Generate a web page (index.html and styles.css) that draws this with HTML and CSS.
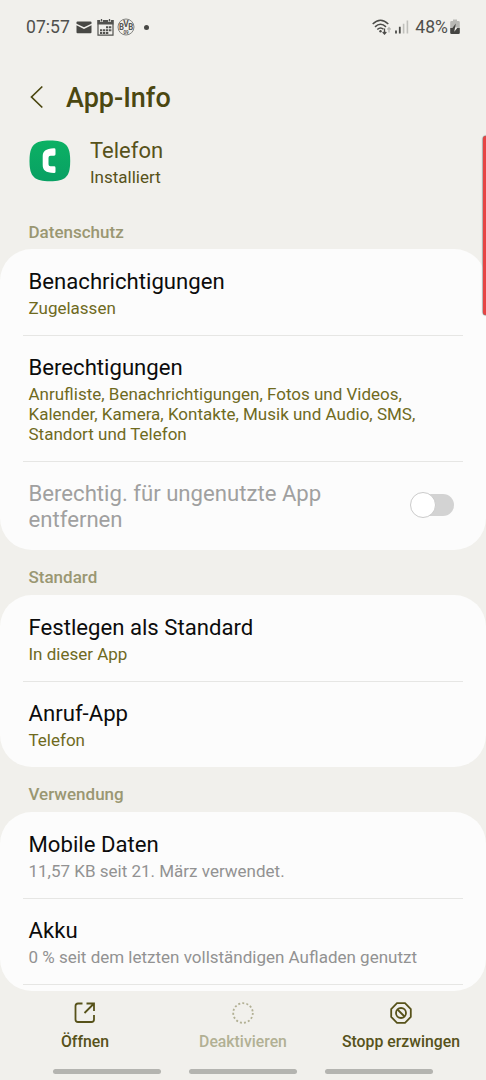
FILE: index.html
```html
<!DOCTYPE html>
<html lang="de">
<head>
    <meta charset="UTF-8">
    <meta name="viewport" content="width=device-width, initial-scale=1.0">
    <title>App-Info</title>
    <link rel="stylesheet" href="styles.css">
</head>
<body>
    <div class="statusbar">
        <div class="status-left">
            <span class="clock">07:57</span>
            <svg class="mail" width="16" height="13" viewBox="0 0 16 13">
                <path d="M1.5 0.5h13q1 0 1 1v1.2L8 6.3 0.5 2.7V1.5q0-1 1-1z" fill="#484845"/>
                <path d="M0.5 4.3L8 7.9l7.5-3.6v7q0 1-1 1h-13q-1 0-1-1z" fill="#484845"/>
            </svg>
            <svg class="calendar" width="17" height="17" viewBox="0 0 17 17">
                <path d="M1 1.5h15v14.7h-15z" fill="none" stroke="#52524f" stroke-width="1.2"/>
                <path d="M0.5 1h16v4.5h-16z" fill="#52524f"/>
                <path d="M4.5 0v3M12.5 0v3" stroke="#f1f0ec" stroke-width="2.6"/>
                <path d="M4.5 0v2.6M12.5 0v2.6" stroke="#52524f" stroke-width="1.3"/>
                <path d="M9 8.3h6M3 11.2h12M3 14h9" stroke="#52524f" stroke-width="2" stroke-dasharray="2.200 0.700"/>
            </svg>
            <svg class="club" width="18" height="18" viewBox="0 0 18 18">
                <circle cx="9" cy="9" r="8" fill="none" stroke="#777774" stroke-width="0.9"/>
                <text x="1.900" y="12.300" font-size="9" textLength="5" lengthAdjust="spacingAndGlyphs">B</text>
                <text x="6.300" y="9" font-size="9.500" textLength="5.400" lengthAdjust="spacingAndGlyphs">V</text>
                <text x="11.200" y="12.300" font-size="9" textLength="5" lengthAdjust="spacingAndGlyphs">B</text>
                <text x="6.400" y="16.200" font-size="4.500">09</text>
            </svg>
            <span class="dot"></span>
        </div>
        <div class="status-right">
            <svg class="wifi" width="20" height="18" viewBox="0 0 20 18">
                <g fill="none" stroke="#4b4b48" stroke-width="1.5">
                    <path d="M0.7 6Q8.5 -1.5 16.3 6"/>
                    <path d="M3 8.9Q8.5 3.6 14 8.9"/>
                    <path d="M5.3 11.5Q8.5 8.5 11.5 11.2"/>
                </g>
                <circle cx="8.5" cy="13.3" r="1.2" fill="#4b4b48"/>
                <path d="M12.5 10.5v5M10.7 14l1.8 2 1.8-2" fill="none" stroke="#4b4b48" stroke-width="1.3"/>
                <path d="M17 14.5V10M15.4 11.5l1.6-1.8 1.6 1.8" fill="none" stroke="#b5b5b1" stroke-width="1.2"/>
            </svg>
            <svg class="signal" width="14" height="14" viewBox="0 0 14 14">
                <path d="M1 13.5v-3M4.8 13.5V6.8" stroke="#4b4b48" stroke-width="1.8"/>
                <path d="M8.6 13.5V3.8M12.4 13.5V0.5" stroke="#c0c0bc" stroke-width="1.6"/>
            </svg>
            <span class="percent">48%</span>
            <svg class="battery" width="10" height="16" viewBox="0 0 10 16">
                <path d="M3 0.5h4v1.5h1.5q1.3 0 1.3 1.3V9H0.2V3.3Q0.2 2 1.5 2H3z" fill="#b9b9b5"/>
                <path d="M0.2 9h9.6v4.7q0 1.300-1.300 1.300h-7q-1.300 0-1.300-1.300z" fill="#454542"/>
                <path d="M5.800 4.500L2.300 9.200H5z" fill="#454542"/>
                <path d="M4.300 12.700L7.600 8.500H5z" fill="#f1f0ec"/>
            </svg>
        </div>
    </div>

    <div class="header">
        <svg class="back" width="14" height="24" viewBox="0 0 14 24">
            <path d="M12.3 1.5L1.5 12l10.8 10.500" fill="none" stroke="#4b4710" stroke-width="1.7"/>
        </svg>
        <h1>App-Info</h1>
    </div>

    <div class="app">
        <svg width="42" height="42" viewBox="0 0 42 42">
            <defs>
                <linearGradient id="green" x1="0" y1="0" x2="0" y2="1">
                    <stop offset="0" stop-color="#0cb164"/>
                    <stop offset="1" stop-color="#08a063"/>
                </linearGradient>
            </defs>
            <path d="M21 0.5C36.5 0.5 41.2 5 41.2 21S36.500 41.200 21 41.200 0.500 37 0.500 21 5.500 0.500 21 0.500z" fill="url(#green)"/>
            <path d="M25 8.300q1.500-0.100 1.500 1.400v4.600q0 1.400-1.400 1.400h-3.600q-2 0-2 2v6.600q0 2 2 2h3.600q1.400 0 1.400 1.400v4q0 1.500-1.500 1.400C16.500 32.700 13.700 30 13.700 25v-8.500C13.700 11.500 16.500 8.600 25 8.300z" fill="#fff"/>
        </svg>
        <div class="app-text">
            <div class="app-name">Telefon</div>
            <div class="app-state">Installiert</div>
        </div>
    </div>

    <div class="content">
        <h2>Datenschutz</h2>
        <div class="card">
            <div class="item">
                <div class="title">Benachrichtigungen</div>
                <div class="sub">Zugelassen</div>
            </div>
            <div class="item">
                <div class="title">Berechtigungen</div>
                <div class="sub">Anrufliste, Benachrichtigungen, Fotos und Videos,<br>Kalender, Kamera, Kontakte, Musik und Audio, SMS,<br>Standort und Telefon</div>
            </div>
            <div class="item row">
                <div class="title disabled">Berechtig. für ungenutzte App<br>entfernen</div>
                <div class="switch"><div class="knob"></div></div>
            </div>
        </div>

        <h2>Standard</h2>
        <div class="card">
            <div class="item">
                <div class="title">Festlegen als Standard</div>
                <div class="sub">In dieser App</div>
            </div>
            <div class="item">
                <div class="title">Anruf-App</div>
                <div class="sub">Telefon</div>
            </div>
        </div>

        <h2>Verwendung</h2>
        <div class="card last">
            <div class="item">
                <div class="title">Mobile Daten</div>
                <div class="sub grey">11,57 KB seit 21. März verwendet.</div>
            </div>
            <div class="item">
                <div class="title">Akku</div>
                <div class="sub grey">0 % seit dem letzten vollständigen Aufladen genutzt</div>
            </div>
        </div>
    </div>

    <div class="actions">
        <div class="action">
            <svg width="24" height="24" viewBox="0 0 24 24" fill="none" stroke="#57521a" stroke-width="1.8">
                <path d="M9.500 2.500H5q-2.500 0-2.500 2.500v13.500q0 2.500 2.500 2.500h13.500q2.500 0 2.500-2.500v-4.500"/>
                <path d="M13.500 2.500h7.500v7.500M21 2.500l-9.500 9.500"/>
            </svg>
            <span>Öffnen</span>
        </div>
        <div class="action off">
            <svg width="24" height="24" viewBox="0 0 24 24" fill="none" stroke="#b2b094" stroke-width="1.8">
                <circle cx="12" cy="12" r="9.8" stroke-dasharray="2 2.105"/>
            </svg>
            <span>Deaktivieren</span>
        </div>
        <div class="action">
            <svg width="24" height="24" viewBox="0 0 24 24" fill="none" stroke="#57521a" stroke-width="1.8">
                <path d="M8 2.2h8l5.8 5.8v8L16 21.8H8L2.2 16V8z"/>
                <circle cx="12" cy="12" r="5"/>
                <path d="M8.5 8.5l7 7"/>
            </svg>
            <span>Stopp erzwingen</span>
        </div>
    </div>
    <div class="navhints">
        <div></div>
        <div></div>
        <div></div>
    </div>

    <div class="edge"></div>
</body>
</html>
```
FILE: styles.css
```css
* {
    box-sizing: border-box;
}
body {
    font-family: Roboto, "Liberation Sans", sans-serif;
    background-color: #f1f0ec;
    margin: 0;
    width: 486px;
    height: 1080px;
    overflow: hidden;
    position: relative;
    display: flex;
    flex-direction: column;
}
svg {
    display: block;
    flex: none;
}
.statusbar {
    height: 54px;
    padding: 0 26px 0 26px;
    display: flex;
    justify-content: space-between;
    align-items: center;
    color: #50504d;
    font-size: 17.6px;
}
.status-left, .status-right {
    display: flex;
    align-items: center;
}
.mail {
    margin-left: 6px;
}
.calendar {
    margin-left: 5px;
}
.club {
    margin-left: 3px;
    font-weight: bold;
    fill: #555552;
}
.dot {
    width: 5px;
    height: 5px;
    margin-left: 9px;
    border-radius: 50%;
    background-color: #484845;
}
.signal {
    margin: 0 6px 0 3px;
}
.battery {
    margin-left: 2px;
}
.header {
    height: 86px;
    padding-left: 30px;
    display: flex;
    align-items: center;
}
h1 {
    margin: 1px 0 0 22px;
    font-size: 27px;
    line-height: 32px;
    font-weight: 500;
    color: #4b4710;
}
.app {
    height: 77px;
    padding-left: 29px;
    display: flex;
}
.app-text {
    margin-left: 19px;
    color: #57521a;
}
.app-name {
    margin-top: -2px;
    font-size: 22px;
    line-height: 26px;
}
.app-state {
    margin-top: 3px;
    font-size: 17px;
    line-height: 20px;
}
.content {
    height: 774px;
    overflow: hidden;
    border-radius: 0 0 32px 32px;
}
h2 {
    margin: 0;
    height: 45px;
    padding: 17px 28.5px 0;
    font-size: 17px;
    line-height: 20px;
    font-weight: 500;
    color: #9a9772;
}
.content h2:first-child {
    height: 32px;
    padding-top: 5px;
}
.card {
    background-color: #fcfcfc;
    border-radius: 32px;
}
.card.last {
    border-radius: 32px 32px 0 0;
    height: 190px;
}
.item {
    position: relative;
    padding: 19px 28px 17px 28.5px;
}
.item + .item::before, .last .item:last-child::after {
    content: "";
    position: absolute;
    left: 23px;
    right: 23px;
    top: 0;
    height: 1px;
    background-color: #e6e6e4;
}
.last .item:last-child::after {
    top: auto;
    bottom: -1px;
}
.title {
    font-size: 22.15px;
    line-height: 26px;
    color: #0c0c0c;
}
.title.disabled {
    color: #a0a0a0;
}
.sub {
    margin-top: 4px;
    font-size: 17px;
    line-height: 20px;
    color: #6f6a1e;
}
.sub.grey {
    color: #929292;
}
.row {
    padding-bottom: 18px;
    display: flex;
    justify-content: space-between;
    align-items: center;
}
.switch {
    width: 41px;
    height: 22px;
    margin: -2px 4px 0 0;
    border-radius: 11px;
    background-color: #d3d3d3;
    display: flex;
    align-items: center;
}
.knob {
    flex: none;
    width: 26px;
    height: 26px;
    margin-left: -3px;
    border: 1px solid #cbcbcb;
    border-radius: 50%;
    background-color: #fff;
}
.actions {
    height: 78px;
    padding: 10px 6px 0;
    display: flex;
}
.action {
    flex: 1;
    display: flex;
    flex-direction: column;
    align-items: center;
    color: #57521a;
    font-size: 15.8px;
    font-weight: 500;
    line-height: 20px;
}
.action span {
    margin-top: 7px;
    white-space: nowrap;
}
.action.off {
    color: #b2b094;
}
.navhints {
    display: flex;
    justify-content: center;
    gap: 28px;
}
.navhints div {
    width: 108px;
    height: 5px;
    border-radius: 3px;
    background-color: #b4b4b0;
}
.edge {
    position: absolute;
    right: 0;
    top: 136px;
    width: 3.5px;
    height: 179px;
    border-radius: 4px 0 0 4px;
    background-color: #e64444;
    box-shadow: 0 0 1px 0.5px #777;
}
```
